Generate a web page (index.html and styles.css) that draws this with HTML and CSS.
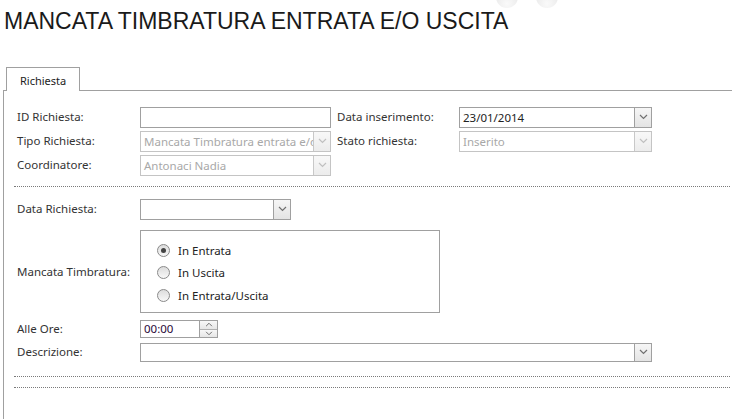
FILE: index.html
```html
<!DOCTYPE html>
<html lang="it">
<head>
  <meta charset="UTF-8">
  <title>Mancata timbratura</title>
  <link rel="stylesheet" href="styles.css">
</head>
<body>
  <div class="top-deco"><span></span><span></span></div>
  <h1 class="page-title">MANCATA TIMBRATURA ENTRATA E/O USCITA</h1>

  <div class="tabs">
    <div class="tab-bar">
      <div class="tab active">Richiesta</div>
    </div>

    <div class="tab-panel">
      <!-- testata richiesta -->
      <div class="form-grid head">
        <label class="lbl">ID Richiesta:</label>
        <div class="field text"></div>
        <label class="lbl right">Data inserimento:</label>
        <div class="field select wide">
          <span class="value">23/01/2014</span>
          <span class="arrow"><svg width="9" height="6" viewBox="0 0 9 6"><polyline points="1,1 4.5,4.5 8,1" /></svg></span>
        </div>

        <label class="lbl">Tipo Richiesta:</label>
        <div class="field select disabled">
          <span class="value">Mancata Timbratura entrata e/o</span>
          <span class="arrow"><svg width="9" height="6" viewBox="0 0 9 6"><polyline points="1,1 4.5,4.5 8,1" /></svg></span>
        </div>
        <label class="lbl right">Stato richiesta:</label>
        <div class="field select wide disabled">
          <span class="value">Inserito</span>
          <span class="arrow"><svg width="9" height="6" viewBox="0 0 9 6"><polyline points="1,1 4.5,4.5 8,1" /></svg></span>
        </div>

        <label class="lbl">Coordinatore:</label>
        <div class="field select disabled">
          <span class="value">Antonaci Nadia</span>
          <span class="arrow"><svg width="9" height="6" viewBox="0 0 9 6"><polyline points="1,1 4.5,4.5 8,1" /></svg></span>
        </div>
      </div>

      <div class="dots"></div>

      <!-- dettaglio -->
      <div class="detail">
        <div class="row">
          <label class="lbl">Data Richiesta:</label>
          <div class="field select short">
            <span class="value"></span>
            <span class="arrow"><svg width="9" height="6" viewBox="0 0 9 6"><polyline points="1,1 4.5,4.5 8,1" /></svg></span>
          </div>
        </div>

        <div class="row radio-row">
          <label class="lbl">Mancata Timbratura:</label>
          <div class="radio-box">
            <div class="radio checked"><span class="dot"></span>In Entrata</div>
            <div class="radio"><span class="dot"></span>In Uscita</div>
            <div class="radio"><span class="dot"></span>In Entrata/Uscita</div>
          </div>
        </div>

        <div class="row ore-row">
          <label class="lbl">Alle Ore:</label>
          <div class="field spinner">
            <span class="value">00:00</span>
            <span class="spin">
              <span><svg width="9" height="6" viewBox="0 0 9 6"><polyline points="1,5 4.5,1.5 8,5" /></svg></span>
              <span><svg width="9" height="6" viewBox="0 0 9 6"><polyline points="1,1 4.5,4.5 8,1" /></svg></span>
            </span>
          </div>
        </div>

        <div class="row desc-row">
          <label class="lbl">Descrizione:</label>
          <div class="field select full">
            <span class="value"></span>
            <span class="arrow"><svg width="9" height="6" viewBox="0 0 9 6"><polyline points="1,1 4.5,4.5 8,1" /></svg></span>
          </div>
        </div>
      </div>

      <div class="dots low"></div>
      <div class="dots second"></div>
    </div>
  </div>
</body>
</html>
```

FILE: styles.css
```css
body {
  margin: 0;
  background-color: #ffffff;
  color: #333333;
  font-family: 'Noto Sans', 'Open Sans', sans-serif;
  font-size: 11.5px;
  position: relative;
  overflow: hidden;
}

.top-deco span {
  position: absolute;
  top: -14px;
  width: 22px;
  height: 22px;
  border-radius: 50%;
  background: radial-gradient(circle at 50% 80%, #fafafa 0%, #e8e8e8 70%, #e0e0e0 100%);
}

.top-deco span:first-child {
  left: 496px;
}

.top-deco span:last-child {
  left: 536px;
}

.page-title {
  margin: 9px 0 0 4px;
  font-family: 'Liberation Sans', Arial, sans-serif;
  font-size: 23px;
  font-weight: normal;
  line-height: 25px;
  color: #1a1a1a;
}

.tabs {
  margin-top: 33px;
  margin-left: 3px;
}

.tab-bar {
  display: flex;
  padding-left: 3px;
  border-bottom: 1px solid #a0a0a0;
}

.tab {
  margin-bottom: -1px;
  padding: 0 13px;
  height: 23px;
  line-height: 26px;
  border: 1px solid #a0a0a0;
  border-bottom: none;
  background-color: #ffffff;
  color: #222222;
  font-size: 11px;
}

.tab-panel {
  border-left: 1px solid #a0a0a0;
  padding: 15px 0 40px 10px;
}

.lbl {
  color: #333333;
  line-height: 22px;
}

.form-grid {
  display: grid;
  grid-template-columns: 123px 197px 122px 193px;
  row-gap: 2px;
  align-items: center;
  padding-left: 3px;
}

.field {
  box-sizing: border-box;
  height: 21px;
  width: 191px;
  border: 1px solid #a0a0a0;
  background-color: #ffffff;
  display: flex;
  align-items: stretch;
  color: #222222;
}

.field .value {
  flex: 1;
  padding-left: 3px;
  line-height: 19px;
  white-space: nowrap;
  overflow: hidden;
}

.field .arrow {
  width: 16px;
  border-left: 1px solid #a0a0a0;
  background: linear-gradient(#f6f6f6, #e4e4e4);
  display: flex;
  align-items: center;
  justify-content: center;
}

.field svg polyline {
  fill: none;
  stroke: #707070;
  stroke-width: 1.2;
}

.field.wide {
  width: 193px;
}

.field.disabled {
  border-color: #c4c4c4;
  color: #a8a8a8;
}

.field.disabled .arrow {
  border-left-color: #c8c8c8;
  background: linear-gradient(#f8f8f8, #ececec);
}

.field.disabled svg polyline {
  stroke: #c0c0c0;
}

.dots {
  margin-top: 10px;
  margin-right: 2px;
  border-top: 1px dotted #7a7a7a;
}

.detail {
  padding-left: 3px;
  padding-top: 11px;
  display: flex;
  flex-direction: column;
}

.row {
  display: flex;
  align-items: center;
}

.row .lbl {
  width: 123px;
  flex-shrink: 0;
}

.radio-row {
  margin-top: 10px;
}

.ore-row {
  margin-top: 5px;
}

.desc-row {
  margin-top: 1px;
}

.field.short {
  width: 151px;
  height: 21px;
}

.field.full {
  width: 512px;
  height: 19px;
}

.field.full .value {
  line-height: 17px;
}

.radio-box {
  box-sizing: border-box;
  width: 300px;
  height: 83px;
  border: 1px solid #a0a0a0;
  padding: 10px 0 0 16px;
  display: flex;
  flex-direction: column;
  gap: 4.5px;
}

.radio {
  display: flex;
  align-items: center;
  height: 18px;
  color: #222222;
}

.radio .dot {
  box-sizing: border-box;
  width: 13px;
  height: 13px;
  margin-right: 8px;
  border: 1px solid #8a8a8a;
  border-radius: 50%;
  background: linear-gradient(#dcdcdc, #f8f8f8);
  display: flex;
  align-items: center;
  justify-content: center;
}

.radio.checked .dot::after {
  content: '';
  width: 5px;
  height: 5px;
  border-radius: 50%;
  background-color: #444444;
}

.field.spinner {
  width: 78px;
  height: 18px;
  color: #2a0a3a;
}

.field.spinner .value {
  line-height: 16px;
}

.spin {
  width: 17px;
  border-left: 1px solid #a0a0a0;
  display: flex;
  flex-direction: column;
}

.spin span {
  flex: 1;
  display: flex;
  align-items: center;
  justify-content: center;
  background: linear-gradient(#f8f8f8, #e6e6e6);
}

.spin span + span {
  border-top: 1px solid #b0b0b0;
}

.spin svg {
  width: 8px;
  height: 5px;
}

.dots.low {
  margin-top: 13px;
}
```
